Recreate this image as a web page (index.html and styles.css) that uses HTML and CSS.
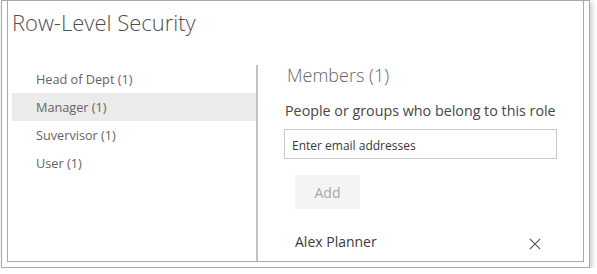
FILE: index.html
```html
<!DOCTYPE html>
<html lang="en">
<head>
<meta charset="utf-8">
<title>Row-Level Security</title>
<link rel="stylesheet" href="styles.css">
</head>
<body>
<div class="frame">
  <div class="panel">
    <h1 class="title">Row-Level Security</h1>
    <div class="main">
      <ul class="roles">
        <li class="role">Head of Dept (1)</li>
        <li class="role selected">Manager (1)</li>
        <li class="role">Suvervisor (1)</li>
        <li class="role">User (1)</li>
      </ul>
      <div class="members">
        <h2 class="members-title">Members (1)</h2>
        <label class="field-label" for="email">People or groups who belong to this role</label>
        <input id="email" class="email" type="text" placeholder="Enter email addresses">
        <button class="add" type="button">Add</button>
        <div class="member">
          <span class="member-name">Alex Planner</span>
          <svg class="remove" width="12" height="12" viewBox="0 0 12 12" aria-label="Remove">
            <path d="M0.8 0.8 L11.2 11.2 M11.2 0.8 L0.8 11.2" stroke="#555" stroke-width="1.2" fill="none"/>
          </svg>
        </div>
      </div>
    </div>
  </div>
</div>
</body>
</html>
```
FILE: styles.css
```css
html, body {
  margin: 0;
  padding: 0;
  background: #ffffff;
}

body {
  font-family: "Open Sans", "Noto Sans", sans-serif;
  color: #444;
}

.frame {
  box-sizing: border-box;
  width: 589px;
  height: 268px;
  margin-left: 1px;
  border: 1px solid #a9a9a9;
  padding: 0 5px 5px 5px;
  background: #fff;
  box-shadow: 2px 2px 5px rgba(0, 0, 0, 0.22);
}

.panel {
  box-sizing: border-box;
  height: 100%;
  border: 1px solid #a9a9a9;
  border-top: none;
  padding-left: 4px;
  display: flex;
  flex-direction: column;
}

.title {
  margin: 6px 0 0 0;
  font-size: 22px;
  line-height: 30px;
  font-weight: 300;
  color: #505050;
}

.main {
  flex: 1;
  display: flex;
  margin-top: 28px;
}

.roles {
  list-style: none;
  margin: 0;
  padding: 0;
  width: 244px;
}

.role {
  height: 28px;
  line-height: 28px;
  padding-left: 24px;
  font-size: 12.7px;
  color: #636363;
}

.role.selected {
  background: #ebebeb;
}

.members {
  flex: 1;
  border-left: 2px solid #c2c2c2;
  padding-left: 26px;
  display: flex;
  flex-direction: column;
  align-items: flex-start;
}

.members-title {
  margin: 0;
  font-size: 18px;
  line-height: 20px;
  font-weight: 300;
  color: #666;
  padding-left: 3px;
}

.field-label {
  margin-top: 16px;
  font-size: 14.3px;
  line-height: 20px;
  color: #464646;
  padding-left: 1px;
}

.email {
  box-sizing: border-box;
  margin: 8px 0 0 0;
  width: 273px;
  height: 30px;
  border: 1px solid #c8c8c8;
  padding: 2px 7px 0 7px;
  font-family: inherit;
  font-size: 12px;
  color: #333;
  outline: none;
}

.email::placeholder {
  color: #383838;
  opacity: 1;
}

.add {
  margin: 16px 0 0 11px;
  width: 65px;
  height: 34px;
  border: none;
  background: #f4f4f4;
  font-family: inherit;
  font-size: 14px;
  color: #a8a8a8;
  padding: 0;
}

.member {
  margin: 21px 0 0 11px;
  width: 246px;
  height: 24px;
  display: flex;
  align-items: center;
  justify-content: space-between;
}

.member-name {
  font-size: 14px;
  line-height: 24px;
  color: #3a3a3a;
}

.remove {
  display: block;
  margin-top: 3px;
}
```
